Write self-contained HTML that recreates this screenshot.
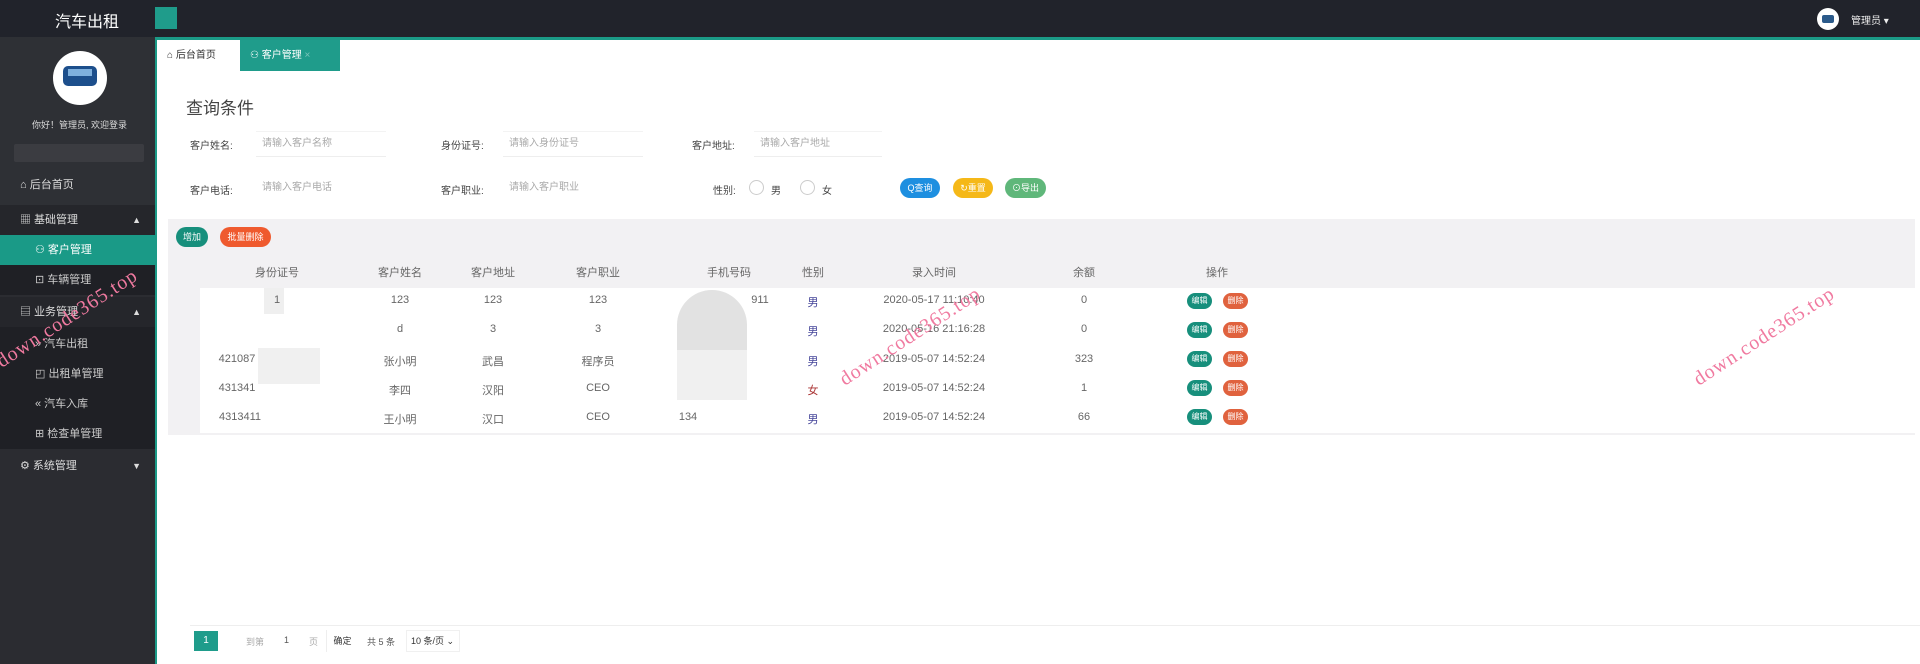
<!DOCTYPE html><html><head><meta charset="utf-8"><style>
*{margin:0;padding:0;box-sizing:border-box}
body{width:1920px;height:664px;overflow:hidden;background:#fff;font-family:"Liberation Sans","Noto Sans CJK SC",sans-serif;font-size:11px;color:#555;position:relative}
.a{position:absolute;white-space:nowrap}
.side{position:absolute;left:0;top:37px;width:155px;height:627px;background:#2b2c31}
.side .a,.side .mi{margin-top:-37px}
.mi{position:absolute;left:0;width:155px;height:30px;line-height:30px;color:#ddd;font-size:11px}
.btn{position:absolute;height:20px;line-height:20px;border-radius:10px;color:#fff;font-size:9px;text-align:center}
.sm{position:absolute;width:25px;height:16px;line-height:16px;border-radius:8px;color:#fff;font-size:8px;text-align:center}
.td{position:absolute;transform:translateX(-50%);font-size:11px;color:#666;white-space:nowrap}
.wm{position:absolute;color:#f07aa0;font-family:"Liberation Serif",serif;font-size:20px;transform:rotate(-33deg);transform-origin:left bottom;white-space:nowrap;letter-spacing:1px}
.inp{position:absolute;height:26px;border-bottom:1px solid #eee;border-top:1px solid #f3f3f3;color:#aaa;font-size:10px;line-height:24px;padding-left:6px}
.lbl{position:absolute;font-size:10px;color:#444}
</style></head><body>
<div class="a" style="left:0;top:0;width:1920px;height:37px;background:#21232b"></div>
<div class="a" style="left:155px;top:37px;width:1765px;height:3px;background:#1b9a87"></div>
<div class="a" style="left:55px;top:8px;color:#fff;font-size:16px;z-index:3">汽车出租</div>
<div class="a" style="left:155px;top:7px;width:22px;height:22px;background:#1f9c8b"></div>
<div class="a" style="left:1817px;top:8px;width:22px;height:22px;border-radius:50%;background:#fff"></div>
<div class="a" style="left:1822px;top:15px;width:12px;height:8px;border-radius:2px;background:#2b5a8a"></div>
<div class="a" style="left:1851px;top:12px;color:#eee;font-size:10px">管理员 ▾</div>
<div class="side">
 <div class="a" style="left:0;top:37px;width:155px;height:210px;background:#2e3035"></div>
 <div class="a" style="left:53px;top:51px;width:54px;height:54px;border-radius:50%;background:#fff"></div>
 <div class="a" style="left:63px;top:66px;width:34px;height:20px;border-radius:5px;background:#1d4f8c"></div>
 <div class="a" style="left:68px;top:69px;width:24px;height:7px;background:#7fb0dd"></div>
 <div class="a" style="left:32px;top:118px;color:#ddd;font-size:9px">你好！管理员, 欢迎登录</div>
 <div class="a" style="left:14px;top:144px;width:130px;height:18px;background:#3b3c41;border-radius:2px"></div>
 <div class="mi" style="top:170px;padding-left:20px">⌂ 后台首页</div>
 <div class="mi" style="top:205px;background:#25262b;padding-left:20px">▦ 基础管理<span style="position:absolute;right:14px;font-size:9px">▲</span></div>
 <div class="mi" style="top:235px;background:#1a9a87;color:#fff;padding-left:35px">⚇ 客户管理</div>
 <div class="mi" style="top:265px;background:#1f2025;padding-left:35px;color:#ccc">⊡ 车辆管理</div>
 <div class="mi" style="top:297px;background:#25262b;padding-left:20px">▤ 业务管理<span style="position:absolute;right:14px;font-size:9px">▲</span></div>
 <div class="a" style="left:0;top:327px;width:155px;height:122px;background:#1f2025"></div>
 <div class="mi" style="top:329px;padding-left:35px;color:#ccc">» 汽车出租</div>
 <div class="mi" style="top:359px;padding-left:35px;color:#ccc">◰ 出租单管理</div>
 <div class="mi" style="top:389px;padding-left:35px;color:#ccc">« 汽车入库</div>
 <div class="mi" style="top:419px;padding-left:35px;color:#ccc">⊞ 检查单管理</div>
 <div class="mi" style="top:451px;background:#2b2c31;padding-left:20px">⚙ 系统管理<span style="position:absolute;right:14px;font-size:9px">▼</span></div>
</div>
<div class="a" style="left:155px;top:40px;width:2px;height:624px;background:#1b9a87"></div>
<div class="a" style="left:157px;top:40px;width:83px;height:31px;line-height:31px;padding-left:10px;color:#333;font-size:10px">⌂ 后台首页</div>
<div class="a" style="left:240px;top:40px;width:100px;height:31px;line-height:31px;padding-left:10px;background:#1f9c8b;color:#fff;font-size:10px">⚇ 客户管理 <span style="opacity:.4">×</span></div>
<div class="a" style="left:186px;top:94px;font-size:17px;color:#444">查询条件</div>
<div class="lbl" style="left:190px;top:137px">客户姓名:</div><div class="inp" style="left:256px;top:131px;width:130px">请输入客户名称</div>
<div class="lbl" style="left:441px;top:137px">身份证号:</div><div class="inp" style="left:503px;top:131px;width:140px">请输入身份证号</div>
<div class="lbl" style="left:692px;top:137px">客户地址:</div><div class="inp" style="left:754px;top:131px;width:128px">请输入客户地址</div>
<div class="lbl" style="left:190px;top:182px">客户电话:</div><div class="inp" style="left:256px;top:176px;width:130px;border:none">请输入客户电话</div>
<div class="lbl" style="left:441px;top:182px">客户职业:</div><div class="inp" style="left:503px;top:176px;width:140px;border:none">请输入客户职业</div>
<div class="lbl" style="left:713px;top:182px">性别:</div>
<div class="a" style="left:749px;top:180px;width:15px;height:15px;border:1px solid #ccc;border-radius:50%"></div><div class="lbl" style="left:771px;top:182px">男</div>
<div class="a" style="left:800px;top:180px;width:15px;height:15px;border:1px solid #ccc;border-radius:50%"></div><div class="lbl" style="left:822px;top:182px">女</div>
<div class="btn" style="left:900px;top:178px;width:40px;background:#1e8fe0">Q查询</div>
<div class="btn" style="left:953px;top:178px;width:40px;background:#f5b818">↻重置</div>
<div class="btn" style="left:1005px;top:178px;width:41px;background:#5fb77a">⊙导出</div>
<div class="a" style="left:168px;top:219px;width:1747px;height:216px;background:#f2f1f3"></div>
<div class="a" style="left:200px;top:288px;width:1715px;height:145px;background:#fff"></div>
<div class="btn" style="left:176px;top:227px;width:32px;background:#178f7c">增加</div>
<div class="btn" style="left:220px;top:227px;width:51px;background:#ef5a2e">批量删除</div>
<div class="td" style="left:277px;top:264px">身份证号</div><div class="td" style="left:400px;top:264px">客户姓名</div><div class="td" style="left:493px;top:264px">客户地址</div><div class="td" style="left:598px;top:264px">客户职业</div><div class="td" style="left:729px;top:264px">手机号码</div><div class="td" style="left:813px;top:264px">性别</div><div class="td" style="left:934px;top:264px">录入时间</div><div class="td" style="left:1084px;top:264px">余额</div><div class="td" style="left:1217px;top:264px">操作</div>
<div class="a" style="left:264px;top:288px;width:20px;height:26px;background:#efefef"></div>
<div class="a" style="left:677px;top:290px;width:70px;height:62px;border-radius:35px 35px 0 0;background:#e2e2e2"></div>
<div class="a" style="left:677px;top:350px;width:70px;height:50px;background:#f0f0f0"></div>
<div class="a" style="left:258px;top:348px;width:62px;height:36px;background:#f0f0f0"></div>
<div class="td" style="left:277px;top:294px">1</div><div class="td" style="left:400px;top:294px">123</div><div class="td" style="left:493px;top:294px">123</div><div class="td" style="left:598px;top:294px">123</div><div class="td" style="left:760px;top:294px">911</div><div class="td" style="left:813px;top:294px;color:#449">男</div><div class="td" style="left:934px;top:294px">2020-05-17 11:10:40</div><div class="td" style="left:1084px;top:294px">0</div>
<div class="td" style="left:400px;top:323px">d</div><div class="td" style="left:493px;top:323px">3</div><div class="td" style="left:598px;top:323px">3</div><div class="td" style="left:813px;top:323px;color:#449">男</div><div class="td" style="left:934px;top:323px">2020-05-16 21:16:28</div><div class="td" style="left:1084px;top:323px">0</div>
<div class="td" style="left:237px;top:353px">421087</div><div class="td" style="left:400px;top:353px">张小明</div><div class="td" style="left:493px;top:353px">武昌</div><div class="td" style="left:598px;top:353px">程序员</div><div class="td" style="left:813px;top:353px;color:#449">男</div><div class="td" style="left:934px;top:353px">2019-05-07 14:52:24</div><div class="td" style="left:1084px;top:353px">323</div>
<div class="td" style="left:237px;top:382px">431341</div><div class="td" style="left:400px;top:382px">李四</div><div class="td" style="left:493px;top:382px">汉阳</div><div class="td" style="left:598px;top:382px">CEO</div><div class="td" style="left:813px;top:382px;color:#a33">女</div><div class="td" style="left:934px;top:382px">2019-05-07 14:52:24</div><div class="td" style="left:1084px;top:382px">1</div>
<div class="td" style="left:240px;top:411px">4313411</div><div class="td" style="left:400px;top:411px">王小明</div><div class="td" style="left:493px;top:411px">汉口</div><div class="td" style="left:598px;top:411px">CEO</div><div class="td" style="left:688px;top:411px">134</div><div class="td" style="left:813px;top:411px;color:#449">男</div><div class="td" style="left:934px;top:411px">2019-05-07 14:52:24</div><div class="td" style="left:1084px;top:411px">66</div>
<div class="sm" style="left:1187px;top:293px;background:#178f7c">编辑</div><div class="sm" style="left:1223px;top:293px;background:#e0623e">删除</div>
<div class="sm" style="left:1187px;top:322px;background:#178f7c">编辑</div><div class="sm" style="left:1223px;top:322px;background:#e0623e">删除</div>
<div class="sm" style="left:1187px;top:351px;background:#178f7c">编辑</div><div class="sm" style="left:1223px;top:351px;background:#e0623e">删除</div>
<div class="sm" style="left:1187px;top:380px;background:#178f7c">编辑</div><div class="sm" style="left:1223px;top:380px;background:#e0623e">删除</div>
<div class="sm" style="left:1187px;top:409px;background:#178f7c">编辑</div><div class="sm" style="left:1223px;top:409px;background:#e0623e">删除</div>
<div class="a" style="left:190px;top:625px;width:1730px;height:1px;background:#eee"></div>
<div class="a" style="left:194px;top:631px;width:24px;height:20px;background:#1f9c8b;color:#fff;font-size:10px;text-align:center;line-height:20px">1</div>
<div class="a" style="left:246px;top:635px;font-size:9px;color:#aaa">到第</div>
<div class="a" style="left:284px;top:635px;font-size:9px;color:#555">1</div>
<div class="a" style="left:309px;top:635px;font-size:9px;color:#aaa">页</div>
<div class="a" style="left:326px;top:630px;width:32px;height:22px;border-left:1px solid #eee;font-size:9px;color:#333;text-align:center;line-height:22px">确定</div>
<div class="a" style="left:367px;top:635px;font-size:9px;color:#555">共 5 条</div>
<div class="a" style="left:406px;top:630px;width:54px;height:22px;border:1px solid #f0f0f0;font-size:9px;color:#333;line-height:20px;padding-left:4px">10 条/页 ⌄</div>
<div class="wm" style="left:5px;top:350px">down.code365.top</div>
<div class="wm" style="left:848px;top:368px">down.code365.top</div>
<div class="wm" style="left:1702px;top:368px">down.code365.top</div>
</body></html>
